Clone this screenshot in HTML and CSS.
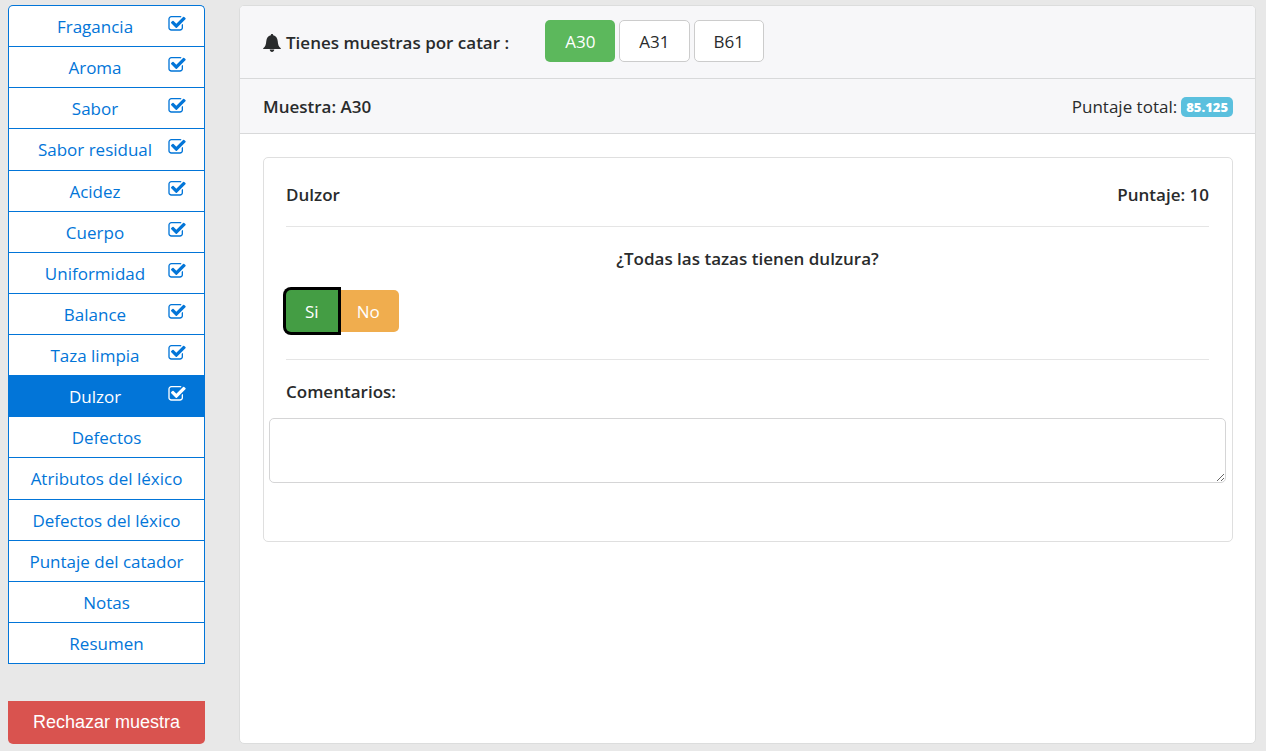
FILE: index.html
```html
<!DOCTYPE html>
<html lang="es">
<head>
<meta charset="utf-8">
<title>Catación - Dulzor</title>
<link rel="stylesheet" href="styles.css">
</head>
<body>
<svg class="sprite" aria-hidden="true">
  <symbol id="check" viewBox="0 0 1664 1536">
    <path d="M1408 802v318q0 119-84.500 203.500T1120 1408H288q-119 0-203.500-84.500T0 1120V288Q0 169 84.500 84.500T288 0h832q63 0 117 25 15 7 18 23 3 17-9 29l-49 49q-10 10-23 10-3 0-9-2-23-6-45-6H288q-66 0-113 47t-47 113v832q0 66 47 113t113 47h832q66 0 113-47t47-113V866q0-13 9-22l64-64q10-10 23-10 6 0 12 3 20 8 20 29zm231-489l-814 814q-24 24-57 24t-57-24L281 697q-24-24-24-57t24-57l110-110q24-24 57-24t57 24l263 263 647-647q24-24 57-24t57 24l110 110q24 24 24 57t-24 57z"/>
  </symbol>
</svg>
<div class="layout">
  <aside class="sidebar">
    <nav class="steps">
      <a class="step" href="#"><span class="step-name">Fragancia</span><svg class="check"><use href="#check"/></svg></a>
      <a class="step" href="#"><span class="step-name">Aroma</span><svg class="check"><use href="#check"/></svg></a>
      <a class="step" href="#"><span class="step-name">Sabor</span><svg class="check"><use href="#check"/></svg></a>
      <a class="step" href="#"><span class="step-name">Sabor residual</span><svg class="check"><use href="#check"/></svg></a>
      <a class="step" href="#"><span class="step-name">Acidez</span><svg class="check"><use href="#check"/></svg></a>
      <a class="step" href="#"><span class="step-name">Cuerpo</span><svg class="check"><use href="#check"/></svg></a>
      <a class="step" href="#"><span class="step-name">Uniformidad</span><svg class="check"><use href="#check"/></svg></a>
      <a class="step" href="#"><span class="step-name">Balance</span><svg class="check"><use href="#check"/></svg></a>
      <a class="step" href="#"><span class="step-name">Taza limpia</span><svg class="check"><use href="#check"/></svg></a>
      <a class="step active" href="#" aria-current="step"><span class="step-name">Dulzor</span><svg class="check"><use href="#check"/></svg></a>
      <a class="step" href="#"><span class="step-name">Defectos</span></a>
      <a class="step" href="#"><span class="step-name">Atributos del léxico</span></a>
      <a class="step" href="#"><span class="step-name">Defectos del léxico</span></a>
      <a class="step" href="#"><span class="step-name">Puntaje del catador</span></a>
      <a class="step" href="#"><span class="step-name">Notas</span></a>
      <a class="step" href="#"><span class="step-name">Resumen</span></a>
    </nav>
    <button class="reject" type="button">Rechazar muestra</button>
  </aside>
  <main class="panel">
    <header class="samples">
      <h1 class="samples-title">
        <svg class="bell" viewBox="0 0 18 18" aria-hidden="true"><path d="M9 0c.8 0 1.200.5 1.200 1.300C13 2 14.400 4 14.700 7c.3 4 1 5.800 3.100 7.200V15H.2v-.8C2.300 12.800 3 11 3.300 7 3.600 4 5 2 7.800 1.300 7.800.5 8.200 0 9 0zM6.700 15.500h4.600C11.200 17 10.200 18 9 18s-2.200-1-2.300-2.500z"/></svg>
        <span>Tienes muestras por catar :</span>
      </h1>
      <div class="sample-list">
        <button class="btn btn-success" type="button">A30</button>
        <button class="btn btn-default" type="button">A31</button>
        <button class="btn btn-default" type="button">B61</button>
      </div>
    </header>
    <div class="summary">
      <h2 class="heading">Muestra: A30</h2>
      <p class="total">Puntaje total: <span class="badge">85.125</span></p>
    </div>
    <div class="content">
      <section class="card">
        <div class="card-head">
          <h3 class="heading">Dulzor</h3>
          <p class="heading">Puntaje: 10</p>
        </div>
        <div class="question">
          <p class="heading question-text">¿Todas las tazas tienen dulzura?</p>
          <div class="choice">
            <button class="btn choice-yes" type="button" aria-pressed="true">Si</button>
            <button class="btn choice-no" type="button">No</button>
          </div>
        </div>
        <label class="heading comments-label" for="comments">Comentarios:</label>
        <textarea class="comments" id="comments"></textarea>
      </section>
    </div>
  </main>
</div>
</body>
</html>
```
FILE: styles.css
```css
* { box-sizing: border-box; }
body {
  margin: 0;
  background: #e8e8e8;
  color: #292b2c;
  font-family: "Segoe UI", "Open Sans", "Noto Sans", sans-serif;
  font-size: 17px;
  line-height: 26px;
}
h1, h2, h3, p { margin: 0; }
.sprite { display: none; }
.layout {
  display: flex;
  gap: 34px;
  min-height: 100vh;
  padding: 5px 10px 7px 8px;
}
.sidebar { flex: 0 0 197px; }
.steps {
  display: grid;
  grid-auto-rows: 1fr;
  min-height: 659px;
  overflow: hidden;
  border: 1px solid #0275d8;
  border-bottom: 0;
  border-radius: 5px 5px 0 0;
  background: #fff;
}
.step {
  display: flex;
  align-items: center;
  gap: 5px;
  padding: 2px 18px 0;
  border-bottom: 1px solid #0275d8;
  color: #0275d8;
  text-decoration: none;
  white-space: nowrap;
}
.step-name { flex: 1; text-align: center; }
.check {
  width: 18px;
  height: 16px;
  margin-bottom: 6px;
  fill: currentColor;
}
.active { background: #0275d8; color: #fff; }
.reject {
  width: 100%;
  height: 43px;
  margin-top: 37px;
  border: 0;
  border-radius: 0 0 5px 5px;
  background: #d9534f;
  color: #fff;
  font-family: Arial, "Liberation Sans", sans-serif;
  font-size: 18px;
}
.panel {
  flex: 1;
  border: 1px solid #dcdddd;
  border-radius: 5px;
  background: #fff;
}
.samples, .summary {
  display: flex;
  align-items: center;
  padding: 0 22px 0 23px;
  border-bottom: 1px solid #d8d9da;
  background: #f7f7f9;
}
.samples {
  gap: 36px;
  padding-top: 14px;
  padding-bottom: 16px;
  border-radius: 4px 4px 0 0;
}
.samples-title {
  display: flex;
  align-items: center;
  gap: 5px;
  padding-top: 3px;
  font-size: 17px;
  font-weight: 600;
}
.bell { width: 18px; height: 18px; fill: currentColor; }
.sample-list { display: flex; gap: 4px; }
.sample-list .btn { padding: 2px 19px 0; }
.summary { justify-content: space-between; padding-top: 15px; padding-bottom: 13px; }
.heading { font-size: 17px; font-weight: 600; }
.total { display: flex; align-items: center; gap: 4px; }
.badge {
  padding: 0 5px;
  border-radius: 5px;
  background: #5bc0de;
  color: #fff;
  font-size: 13px;
  font-weight: 800;
  line-height: 20px;
}
.btn {
  height: 42px;
  padding: 2px 18px 0;
  border: 1px solid transparent;
  border-radius: 5px;
  color: #fff;
  font: inherit;
}
.btn-success { background: #5cb85c; }
.btn-default { border-color: #ccc; background: #fff; color: #292b2c; }
.content { padding: 23px 22px 23px 23px; }
.card {
  min-height: 385px;
  padding: 24px 6px 58px 5px;
  border: 1px solid #dfdfdf;
  border-radius: 5px;
}
.card-head, .question {
  margin: 0 17px;
  border-bottom: 1px solid #e5e5e5;
}
.card-head {
  display: flex;
  justify-content: space-between;
  padding-bottom: 18px;
}
.question { padding: 19px 0 27px; }
.question-text { text-align: center; }
.choice { display: flex; margin-top: 18px; }
.choice-yes {
  z-index: 1;
  border-radius: 5px 0 0 5px;
  background: #449d44;
  box-shadow: 0 0 0 3px #000;
}
.choice-no { border-radius: 0 5px 5px 0; background: #f0ad4e; }
.comments-label { display: block; margin: 19px 17px 13px; }
.comments {
  display: block;
  width: 100%;
  height: 65px;
  padding: 8px 12px;
  border: 1px solid #d5d5d6;
  border-radius: 5px;
  background: #fff;
  font: inherit;
  resize: vertical;
}
```
